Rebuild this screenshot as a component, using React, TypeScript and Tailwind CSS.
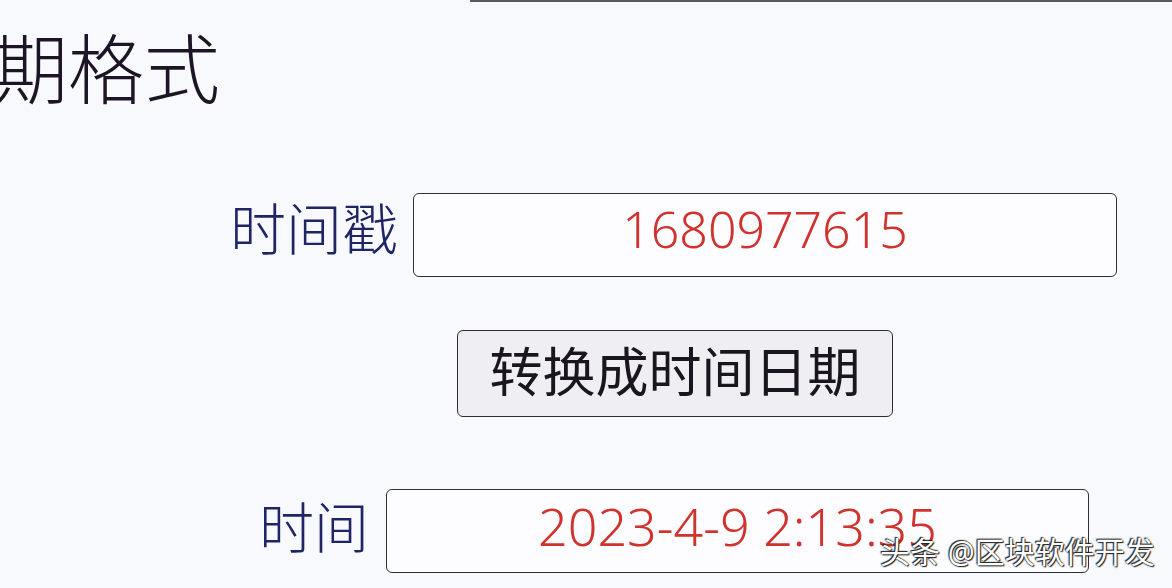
export default function App() {
  return (
    <div
      className="relative h-[588px] w-[1172px] overflow-hidden bg-[#f7f9fc]"
      style={{ fontFamily: '"Noto Sans", "Noto Sans CJK SC", sans-serif' }}
    >
      {/* top edge strip */}
      <div className="ml-[470px] h-[2px] bg-[#5a5a5a]" />

      <h1 className="ml-[-84px] mt-[25px] whitespace-nowrap text-[76px] font-light leading-[84px] text-[#1d1426]">
        日期格式
      </h1>

      <div className="mt-[82px] flex items-center">
        <label className="mb-[14px] w-[413px] shrink-0 pr-[15px] text-right text-[56px] font-light leading-none text-[#1e2466]">
          时间戳
        </label>
        <div className="flex h-[84px] w-[704px] items-center justify-center rounded-[6px] border-[1.5px] border-[#2f2f3a] bg-[#fdfdff] pb-[12px] text-[50px] font-light text-[#d0322d]">
          1680977615
        </div>
      </div>

      <div className="ml-[457px] mt-[53px]">
        <button className="flex h-[87px] w-[436px] items-center justify-center rounded-[6px] border-[1.5px] border-[#2f2a38] bg-[#eeeef3] pb-[4px] text-[53px] font-normal text-[#1a1620]">
          转换成时间日期
        </button>
      </div>

      <div className="mt-[72px] flex items-center">
        <label className="mb-[10px] w-[386px] shrink-0 pr-[17px] text-right text-[55px] font-light leading-none text-[#1e2466]">
          时间
        </label>
        <div className="flex h-[84px] w-[703px] items-center justify-center rounded-[6px] border-[1.5px] border-[#2f2f3a] bg-[#fdfdff] pb-[10px] text-[52px] font-light text-[#d0322d]">
          2023-4-9 2:13:35
        </div>
      </div>

      {/* watermark */}
      <div
        className="absolute left-[880px] top-[537px] whitespace-nowrap text-[30px] leading-none text-white"
        style={{ textShadow: '0 0 2px #222, 1px 1px 1px #222, -1px -1px 1px #222' }}
      >
        头条 @区块软件开发
      </div>
    </div>
  );
}
